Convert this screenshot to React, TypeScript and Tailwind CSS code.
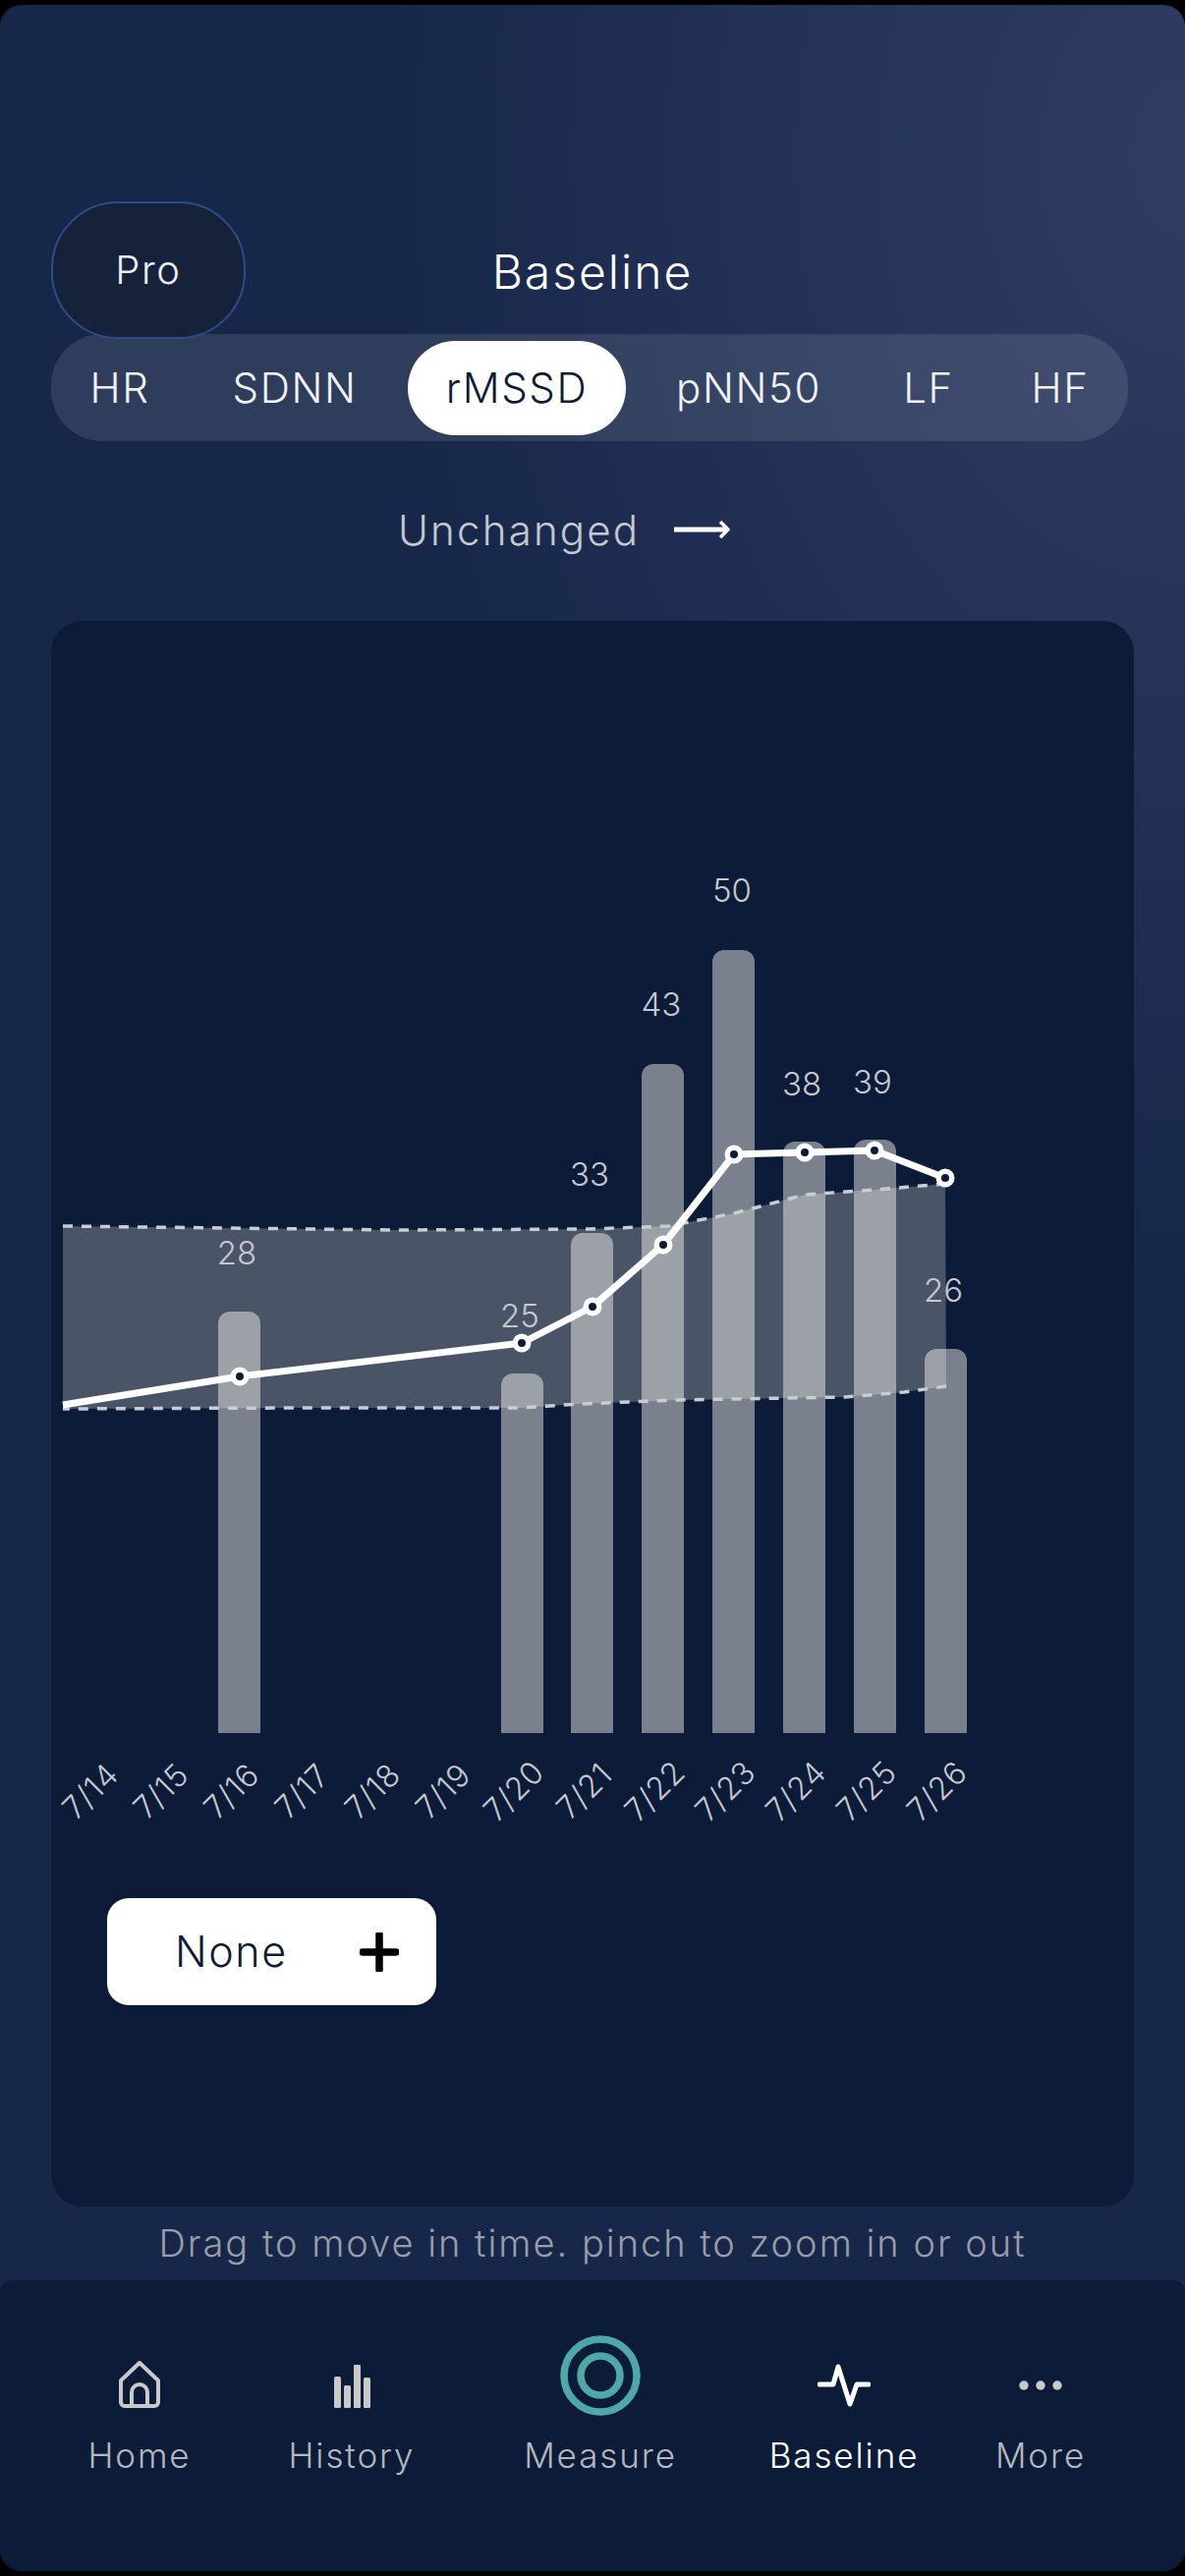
import React from 'react';

const bars = [
  { x: 222, top: 1335 },
  { x: 510, top: 1398 },
  { x: 581, top: 1255 },
  { x: 653, top: 1083 },
  { x: 725, top: 967 },
  { x: 797, top: 1162 },
  { x: 869, top: 1160 },
  { x: 941, top: 1373 },
];

const values = [
  { v: '28', x: 241, y: 1275 },
  { v: '25', x: 529, y: 1339 },
  { v: '33', x: 600, y: 1195 },
  { v: '43', x: 673, y: 1022 },
  { v: '50', x: 745, y: 906 },
  { v: '38', x: 816, y: 1103 },
  { v: '39', x: 888, y: 1101 },
  { v: '26', x: 960, y: 1313 },
];

const dates = ['7/14', '7/15', '7/16', '7/17', '7/18', '7/19', '7/20', '7/21', '7/22', '7/23', '7/24', '7/25', '7/26'];

const line = [
  [244, 1401],
  [531, 1367],
  [603, 1330],
  [675, 1267],
  [747, 1175],
  [819, 1173],
  [890, 1171],
  [962, 1199],
];

const topEdge = '64,1248 400,1252 600,1251 680,1248 747,1235 819,1216 890,1211 962,1205';
const bottomEdge = '963,1411 920,1417 860,1422 800,1423 690,1425 590,1429 530,1433 300,1433 64,1434';

const Chart = () => (
  <svg viewBox="52 632 1102 1240" className="w-[1102px] h-[1240px] block">
    {bars.map((b) => (
      <path
        key={b.x}
        d={`M${b.x} 1764V${b.top + 12}a12 12 0 0 1 12-12h19a12 12 0 0 1 12 12V1764z`}
        fill="#fffaf2"
        fillOpacity={0.46}
      />
    ))}
    <polygon points={`${topEdge} ${bottomEdge}`} fill="#fffaf2" fillOpacity={0.255} />
    <polyline points={topEdge} fill="none" stroke="#c9ccd1" strokeWidth={3.5} strokeDasharray="10 9" />
    <polyline points={bottomEdge} fill="none" stroke="#c9ccd1" strokeWidth={3.5} strokeDasharray="10 9" />
    <polyline
      points={`64,1430 ${line.map((p) => p.join(',')).join(' ')}`}
      fill="none"
      stroke="#fff"
      strokeWidth={7}
      strokeLinejoin="round"
    />
    {line.map(([x, y]) => (
      <circle key={x} cx={x} cy={y} r={6.75} fill="#0b1b38" stroke="#fff" strokeWidth={5.5} />
    ))}
    {values.map((t) => (
      <text key={t.v} x={t.x} y={t.y + 12} textAnchor="middle" fontSize={33} fontWeight={300} fill="#c6c8ce">
        {t.v}
      </text>
    ))}
    {dates.map((d, i) => (
      <text
        key={d}
        x={0}
        y={0}
        textAnchor="middle"
        fontSize={32}
        fontWeight={300}
        letterSpacing={0.6}
        fill="#c6c8ce"
        transform={`translate(${100 + i * 71.8} ${1831}) rotate(-45)`}
      >
        {d}
      </text>
    ))}
  </svg>
);

const NavItem = ({ label, icon, w, color }: { label: string; icon: React.ReactNode; w: string; color: string }) => (
  <div className={`flex flex-col items-center ${w}`}>
    <div className="h-[96px] flex items-end justify-center">{icon}</div>
    <span className={`mt-[26px] text-[35px] leading-[44px] font-light tracking-[1.9px] ${color}`}>{label}</span>
  </div>
);

export default function App() {
  return (
    <div className="w-[1206px] h-[2622px] bg-black pt-[5px] pb-[5px] font-[Inter,sans-serif] overflow-hidden">
      <div className="h-full rounded-[22px] overflow-hidden flex flex-col bg-[radial-gradient(ellipse_820px_1150px_at_100%_6%,#2f3d63_0%,#17274a_100%)]">
        <div className="grid grid-cols-[1fr_auto_1fr] items-center pt-[200px] px-[52px] relative z-10">
          <div className="w-[198px] h-[140px] rounded-[68px] bg-[#16213a] border-2 border-[#2d4d88] flex items-center justify-center text-[40px] font-light text-[#eceef2] tracking-[1.6px]">
            Pro
          </div>
          <div className="text-[48px] font-light text-white tracking-[2px] translate-y-[2px]">Baseline</div>
          <div />
        </div>

        <div className="mx-[52px] mt-[-5px] w-[1096px] h-[109px] rounded-[52px] bg-white/10 flex items-center text-[42px] font-light text-[#f1f2f5] tracking-[1.6px]">
          <div className="ml-[20px] w-[100px] text-center">HR</div>
          <div className="ml-[58px] w-[140px] text-center">SDNN</div>
          <div className="ml-[45px] w-[222px] h-[96px] rounded-[48px] bg-white text-[#0b1b38] flex items-center justify-center">rMSSD</div>
          <div className="ml-[45px] w-[160px] text-center">pNN50</div>
          <div className="ml-[63px] w-[80px] text-center">LF</div>
          <div className="ml-[54px] w-[80px] text-center">HF</div>
        </div>

        <div className="mt-[60px] h-[60px] flex items-center pl-[405px] text-[42px] font-light text-[#c6c8ce] tracking-[2.2px]">
          <span className="w-[281px]">Unchanged</span>
          <svg width="58" height="22" viewBox="0 0 58 22" fill="none" stroke="#fff" strokeWidth="5" strokeLinejoin="round">
            <path d="M0 11H54" />
            <path d="M47 3l8 8-8 8" strokeWidth="3.5" />
          </svg>
        </div>

        <div className="mt-[63px] ml-[52px] w-[1102px] h-[1614px] rounded-[32px] bg-[#0b1b38]">
          <Chart />
          <div className="mt-[60px] ml-[57px] w-[335px] h-[109px] rounded-[22px] bg-white flex items-center justify-between pl-[69px] pr-[38px]">
            <span className="text-[43px] font-light text-[#0b1b38] tracking-[1.6px]">None</span>
            <svg width="40" height="40" viewBox="0 0 40 40" stroke="#000" strokeWidth="7.5" strokeLinecap="round">
              <path d="M20 2V38M3 20H37" />
            </svg>
          </div>
        </div>

        <div className="h-[75px] flex items-center justify-center text-[38px] font-light text-[#9a9da5] tracking-[2px]">
          Drag to move in time. pinch to zoom in or out
        </div>

        <div className="flex-1 bg-[#0b1b38] rounded-t-[12px] flex items-start pt-[34px] pl-[72px]">
          <NavItem
            label="Home"
            w="w-[140px]"
            color="text-[#b4b7bd]"
            icon={
              <svg width="42" height="48" viewBox="0 0 42 48" fill="none" stroke="#c9c9c9" strokeWidth="4" strokeLinejoin="round">
                <path d="M21 2 L40 20 V42 a4 4 0 0 1 -4 4 H6 a4 4 0 0 1 -4 -4 V20 Z" />
                <path d="M13 46 V32 a8 8 0 0 1 16 0 V46" />
              </svg>
            }
          />
          <NavItem
            label="History"
            w="w-[146px] ml-[73px]"
            color="text-[#b4b7bd]"
            icon={
              <svg width="37" height="44" viewBox="0 0 37 44" fill="#c9c9c9">
                <rect x="0" y="12" width="7" height="32" rx="1.5" />
                <rect x="10" y="21" width="7" height="23" rx="1.5" />
                <rect x="20" y="0" width="7" height="44" rx="1" />
                <rect x="30" y="13" width="7" height="31" rx="1.5" />
              </svg>
            }
          />
          <NavItem
            label="Measure"
            w="w-[160px] ml-[100px]"
            color="text-[#b4b7bd]"
            icon={
              <svg width="82" height="82" viewBox="0 0 82 82" fill="none" stroke="#4ea8a8" strokeWidth="7.5" className="mb-[-8px]">
                <circle cx="41" cy="41" r="37" />
                <circle cx="41" cy="41" r="20" />
              </svg>
            }
          />
          <NavItem
            label="Baseline"
            w="w-[160px] ml-[88px]"
            color="text-white"
            icon={
              <svg width="54" height="46" viewBox="0 0 54 46" fill="none" stroke="#fff" strokeWidth="5" strokeLinecap="round" strokeLinejoin="round">
                <path d="M2 22H16L21 4 33 42 40 22H52" />
              </svg>
            }
          />
          <NavItem
            label="More"
            w="w-[100px] ml-[70px]"
            color="text-[#b4b7bd]"
            icon={
              <svg width="44" height="10" viewBox="0 0 44 10" fill="#c9c9c9" className="mb-[18px]">
                <circle cx="5" cy="5" r="4.7" />
                <circle cx="22" cy="5" r="4.7" />
                <circle cx="39" cy="5" r="4.7" />
              </svg>
            }
          />
        </div>
      </div>
    </div>
  );
}
